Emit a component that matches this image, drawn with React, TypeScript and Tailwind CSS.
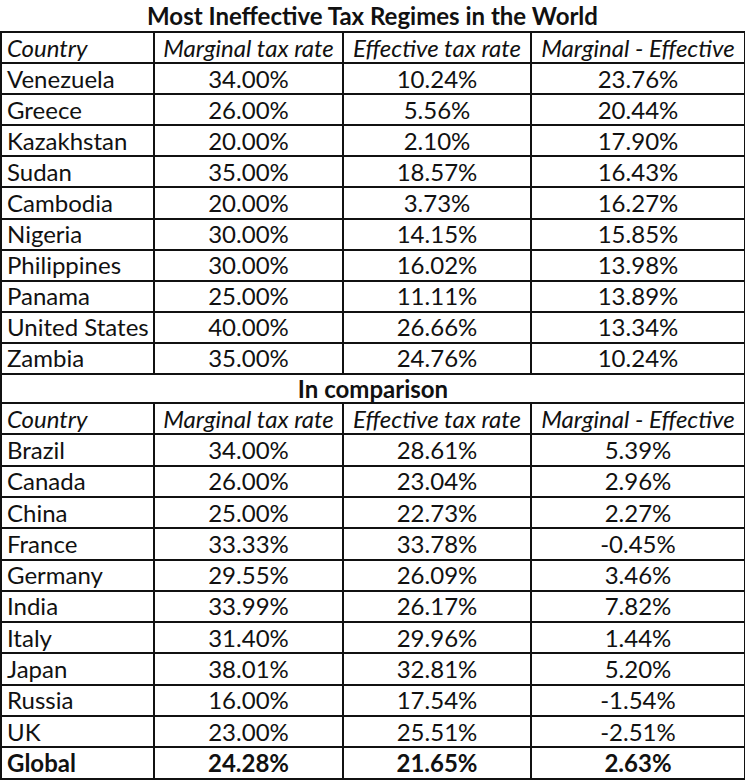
const top = [
  ["Venezuela", "34.00%", "10.24%", "23.76%"],
  ["Greece", "26.00%", "5.56%", "20.44%"],
  ["Kazakhstan", "20.00%", "2.10%", "17.90%"],
  ["Sudan", "35.00%", "18.57%", "16.43%"],
  ["Cambodia", "20.00%", "3.73%", "16.27%"],
  ["Nigeria", "30.00%", "14.15%", "15.85%"],
  ["Philippines", "30.00%", "16.02%", "13.98%"],
  ["Panama", "25.00%", "11.11%", "13.89%"],
  ["United States", "40.00%", "26.66%", "13.34%"],
  ["Zambia", "35.00%", "24.76%", "10.24%"],
];

const comparison = [
  ["Brazil", "34.00%", "28.61%", "5.39%"],
  ["Canada", "26.00%", "23.04%", "2.96%"],
  ["China", "25.00%", "22.73%", "2.27%"],
  ["France", "33.33%", "33.78%", "-0.45%"],
  ["Germany", "29.55%", "26.09%", "3.46%"],
  ["India", "33.99%", "26.17%", "7.82%"],
  ["Italy", "31.40%", "29.96%", "1.44%"],
  ["Japan", "38.01%", "32.81%", "5.20%"],
  ["Russia", "16.00%", "17.54%", "-1.54%"],
  ["UK", "23.00%", "25.51%", "-2.51%"],
];

// first block rows are a touch shorter than the comparison block
const cellA = "border-2 border-[#111] h-[31.1px] p-0 leading-none";
const cellB = "border-2 border-[#111] h-[31.3px] p-0 leading-none";

function HeaderRow({ cell }: { cell: string }) {
  return (
    <tr className="italic">
      <td className={`${cell} text-left pl-[5px]`}>Country</td>
      <td className={`${cell} text-center`}>Marginal tax rate</td>
      <td className={`${cell} text-center`}>Effective tax rate</td>
      <td className={`${cell} text-center`}>Marginal - Effective</td>
    </tr>
  );
}

function DataRow({ row, cell, bold }: { row: string[]; cell: string; bold?: boolean }) {
  return (
    <tr className={bold ? "font-bold" : ""}>
      <td className={`${cell} text-left pl-[5px]`}>{row[0]}</td>
      <td className={`${cell} text-center`}>{row[1]}</td>
      <td className={`${cell} text-center`}>{row[2]}</td>
      <td className={`${cell} text-center`}>{row[3]}</td>
    </tr>
  );
}

export default function App() {
  return (
    <div className="w-[745px] h-[783px] bg-white text-[#111] font-['Lato','Liberation_Sans',sans-serif] text-[24px] overflow-hidden">
      <div className="h-[31px] flex items-center justify-center font-bold">
        Most Ineffective Tax Regimes in the World
      </div>
      <table className="border-collapse table-fixed w-[744px]">
        <colgroup>
          <col className="w-[153px]" />
          <col className="w-[189px]" />
          <col className="w-[188px]" />
          <col className="w-[214px]" />
        </colgroup>
        <tbody>
          <HeaderRow cell={cellA} />
          {top.map((r) => (
            <DataRow key={r[0]} row={r} cell={cellA} />
          ))}
          <tr>
            <td colSpan={4} className="border-2 border-[#111] h-[29px] p-0 text-center font-bold leading-none">
              In comparison
            </td>
          </tr>
          <HeaderRow cell={cellB} />
          {comparison.map((r) => (
            <DataRow key={r[0]} row={r} cell={cellB} />
          ))}
          <DataRow row={["Global", "24.28%", "21.65%", "2.63%"]} cell={cellB} bold />
        </tbody>
      </table>
    </div>
  );
}
